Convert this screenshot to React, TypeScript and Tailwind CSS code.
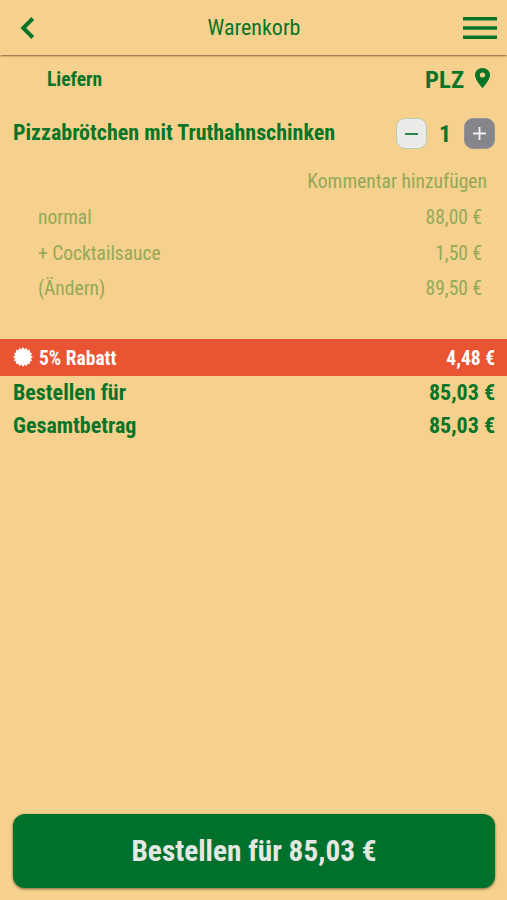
import React from "react";

type LabelProps = { className?: string; children: React.ReactNode };

function Label({ className = "", children }: LabelProps) {
  return <span className={"block whitespace-nowrap " + className}>{children}</span>;
}

const options = [
  { name: "normal", price: "88,00 €" },
  { name: "+ Cocktailsauce", price: "1,50 €" },
  { name: "(Ändern)", price: "89,50 €" },
];

const totals = [
  { name: "Bestellen für", price: "85,03 €" },
  { name: "Gesamtbetrag", price: "85,03 €" },
];

function burstPoints() {
  const points: string[] = [];
  for (let i = 0; i < 32; i++) {
    const r = i % 2 ? 7.5 : 9.3;
    const a = (i * Math.PI) / 16;
    points.push(`${(10 + r * Math.sin(a)).toFixed(2)},${(10 - r * Math.cos(a)).toFixed(2)}`);
  }
  return points.join(" ");
}

export default function App() {
  return (
    <div className="flex h-[900px] w-[507px] flex-col overflow-hidden bg-[#f6d18d] font-['Roboto_Condensed',Roboto,sans-serif] text-[#067527] [font-stretch:75%]">
      <header className="flex h-[55px] shrink-0 items-center justify-between pr-[10px] pl-[20px] shadow-[0_1px_2px_-1px_rgba(80,45,20,0.9),0_1px_2px_rgba(80,45,20,0.4)]">
        <svg className="h-[22px] w-[34px]" viewBox="0 0 34 22" fill="none" stroke="currentColor" strokeWidth="3.9">
          <path d="M12.8 1.5 3.2 11l9.6 9.5" />
        </svg>
        <Label className="mr-[9px] text-[22px]">Warenkorb</Label>
        <svg className="h-[22px] w-[34px]" viewBox="0 0 34 22" fill="currentColor">
          <path d="M0 0h34v3.6H0zM0 9.2h34v3.6H0zM0 18.4h34V22H0z" />
        </svg>
      </header>

      <div className="flex h-[49px] shrink-0 items-center justify-between pr-[17px] pl-[47px] font-bold">
        <Label className="text-[19.5px]">Liefern</Label>
        <div className="flex items-center gap-[11px]">
          <Label className="text-[24.7px]">PLZ</Label>
          <svg className="mb-[2px] h-[20px] w-[15px]" viewBox="5 2 14 20" preserveAspectRatio="none" fill="currentColor">
            <path d="M12 2C8.13 2 5 5.13 5 9c0 5.25 7 13 7 13s7-7.75 7-13c0-3.87-3.13-7-7-7zm0 9.5a2.5 2.5 0 1 1 0-5 2.5 2.5 0 0 1 0 5z" />
          </svg>
        </div>
      </div>

      <div className="flex h-[59px] shrink-0 items-center justify-between pr-3 pl-[13px] font-bold">
        <Label className="pb-[2px] text-[22px]">Pizzabrötchen mit Truthahnschinken</Label>
        <div className="flex items-center">
          <div className="flex h-[31px] w-[31px] items-center justify-center rounded-[9px] border border-[#b9cdb5] bg-[#ebebea]">
            <div className="h-[2px] w-[13px] bg-[#2a8549]" />
          </div>
          <Label className="w-[37px] pr-[1px] text-center text-[24px]">1</Label>
          <div className="flex h-[31px] w-[31px] items-center justify-center rounded-[9px] border border-[#949292] bg-[#85858c]">
            <svg className="h-[13px] w-[13px]" viewBox="0 0 13 13" stroke="#f0f0f0" strokeWidth="1.9">
              <path d="M6.5 0v13M0 6.5h13" />
            </svg>
          </div>
        </div>
      </div>

      <div className="flex h-[36px] shrink-0 items-center justify-end pt-[2px] pr-5 text-[19.6px] text-[#93a958]">
        <Label>Kommentar hinzufügen</Label>
      </div>
      {options.map((option) => (
        <div key={option.name} className="flex h-[35.5px] shrink-0 items-center justify-between pt-[2px] pr-[25px] pl-[38px] text-[19.5px] text-[#93a958]">
          <Label>{option.name}</Label>
          <Label>{option.price}</Label>
        </div>
      ))}

      <div className="mt-[33px] flex h-[37px] shrink-0 items-center justify-between bg-[#e95432] pr-[12px] pl-[13px] text-[19.5px] font-bold text-white">
        <div className="flex items-center gap-[6px]">
          <svg className="h-[20px] w-[20px]" viewBox="0 0 20 20" fill="currentColor" stroke="currentColor" strokeWidth="1" strokeLinejoin="round">
            <polygon points={burstPoints()} />
          </svg>
          <Label className="pt-[3px]">5% Rabatt</Label>
        </div>
        <Label className="pt-[3px]">4,48 €</Label>
      </div>
      {totals.map((total) => (
        <div key={total.name} className="flex h-[33px] shrink-0 items-center justify-between pr-[12px] pl-[13px] text-[22px] font-bold">
          <Label>{total.name}</Label>
          <Label>{total.price}</Label>
        </div>
      ))}

      <button className="mr-[12px] ml-[13px] mt-auto mb-[12px] flex h-[74px] shrink-0 items-center justify-center rounded-[12px] bg-[#00712c] text-[29.3px] font-bold text-[#e4e7e2] shadow-[0_1px_3px_rgba(60,50,20,0.7)]">
        <Label className="pt-[2px]">Bestellen für 85,03 €</Label>
      </button>
    </div>
  );
}
